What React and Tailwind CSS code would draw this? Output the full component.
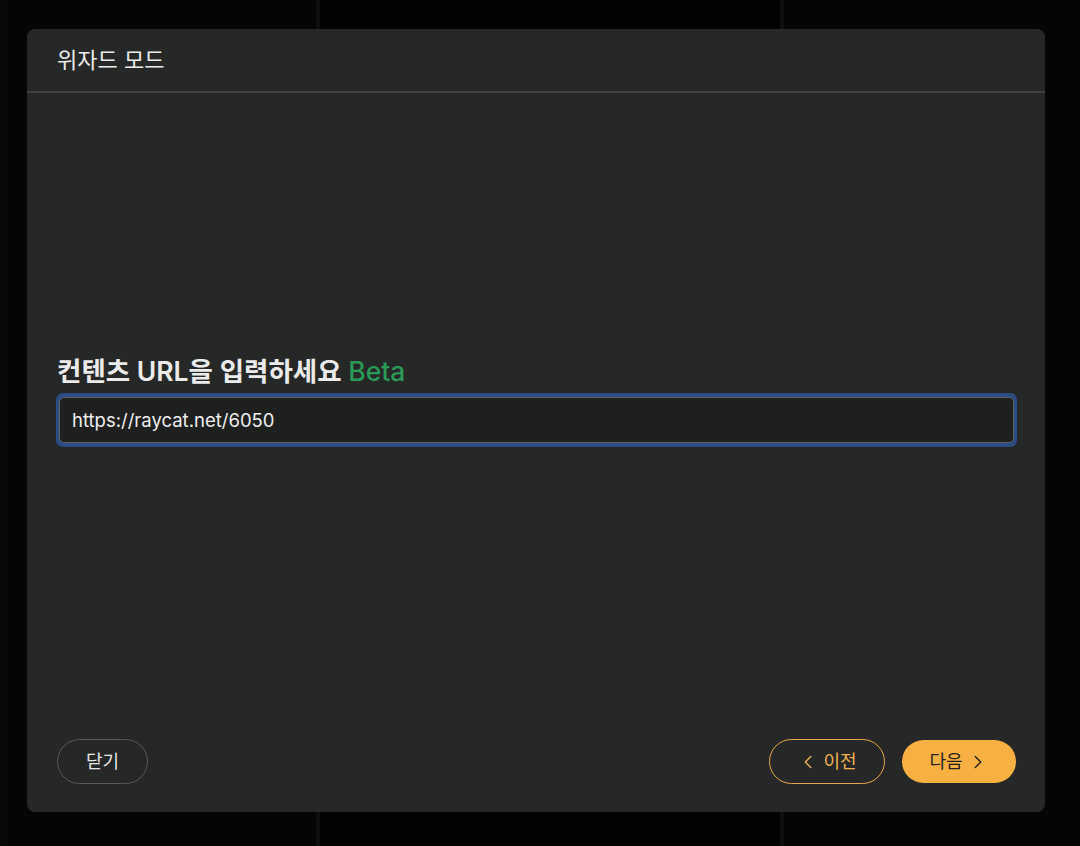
import { ChevronLeft, ChevronRight } from "lucide-react";

const font = {
  fontFamily: '"Inter", "Noto Sans CJK KR", "Noto Sans", sans-serif',
};

export default function App() {
  return (
    <div
      style={font}
      className="relative h-[846px] w-[1080px] overflow-hidden bg-[#050505]"
    >
      {/* faint background columns behind the modal */}
      <div className="absolute inset-0 flex">
        <div className="w-[8px] bg-[#090909]" />
        <div className="w-[308px]" />
        <div className="w-[4px] bg-[#0f0f0f]" />
        <div className="w-[460px] bg-[#020202]" />
        <div className="w-[4px] bg-[#0f0f0f]" />
        <div className="flex-1" />
      </div>

      <div className="relative pl-[27px] pt-[29px]">
        <div className="flex h-[783px] w-[1018px] flex-col rounded-[8px] bg-[#262827]">
          {/* header */}
          <div className="flex h-[64px] items-center border-b-2 border-[#3f4140] px-[30px] pt-[1px]">
            <h2 className="text-[22px] font-normal text-[#ececec]">위자드 모드</h2>
          </div>

          {/* body */}
          <div className="flex flex-1 flex-col justify-center pb-[30px] pl-[29px] pr-[28px]">
            <div className="mb-[6px] pl-[1px] text-[26.5px] font-semibold leading-[32px] text-[#ebebeb]">
              컨텐츠 URL을 입력하세요{" "}
              <span className="font-medium text-[#2a9a58]">Beta</span>
            </div>
            <div className="rounded-[7px] bg-[#2c4c86] px-[3px] py-[4px]">
              <input
                defaultValue="https://raycat.net/6050"
                className="block h-[46px] w-full rounded-[5px] border border-[#616363] bg-[#1e1f1f] px-[12px] text-[18.5px] text-[#f0f0f0] outline-none"
              />
            </div>
          </div>

          {/* footer */}
          <div className="flex items-center justify-between pb-[28px] pl-[30px] pr-[29px]">
            <button className="h-[45px] w-[91px] rounded-full border border-[#575958] text-[18px] text-[#e6e6e6]">
              닫기
            </button>
            <div className="flex gap-[17px]">
              <button className="flex h-[45px] w-[116px] items-center justify-center gap-[4px] rounded-full border-[1.5px] border-[#e6a546] text-[18px] text-[#f2b252]">
                <ChevronLeft size={22} strokeWidth={1.5} />
                이전
              </button>
              <button className="flex h-[43px] w-[114px] items-center justify-center gap-[4px] self-center rounded-full bg-[#f9b042] text-[18px] text-[#1f1f1f]">
                다음
                <ChevronRight size={22} strokeWidth={1.5} />
              </button>
            </div>
          </div>
        </div>
      </div>
    </div>
  );
}
